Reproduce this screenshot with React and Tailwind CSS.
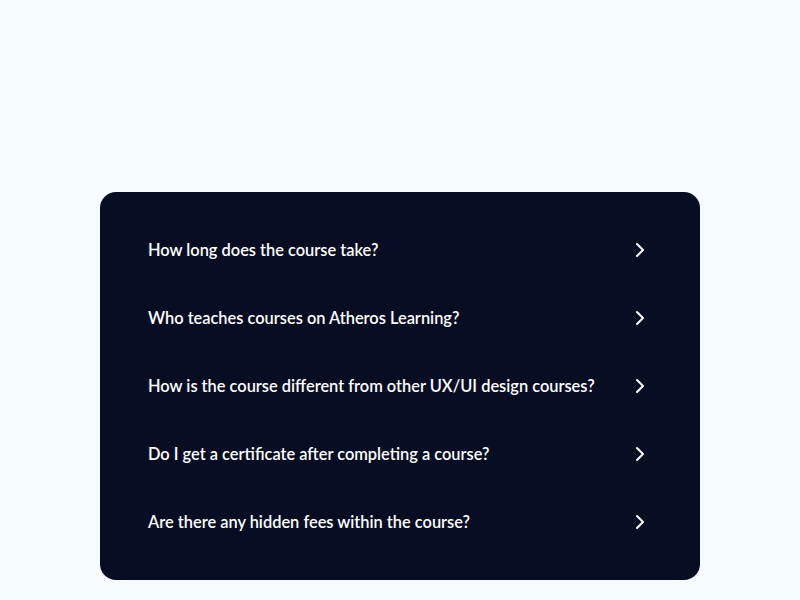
import { ChevronRight } from "lucide-react";

const questions = [
  "How long does the course take?",
  "Who teaches courses on Atheros Learning?",
  "How is the course different from other UX/UI design courses?",
  "Do I get a certificate after completing a course?",
  "Are there any hidden fees within the course?",
];

export default function App() {
  return (
    <div
      className="min-h-screen bg-[#f5fbff] pt-[192px]"
      style={{ fontFamily: 'Lato, "Noto Sans", sans-serif' }}
    >
      <div className="mx-auto w-[600px] rounded-2xl bg-[#070d23] px-12 py-6">
        {questions.map((q, i) => (
          <div key={i} className="flex h-[68px] items-center justify-between">
            <span className="pt-px text-[16.4px] font-semibold text-white">{q}</span>
            <ChevronRight size={24} className="text-white" />
          </div>
        ))}
      </div>
    </div>
  );
}
